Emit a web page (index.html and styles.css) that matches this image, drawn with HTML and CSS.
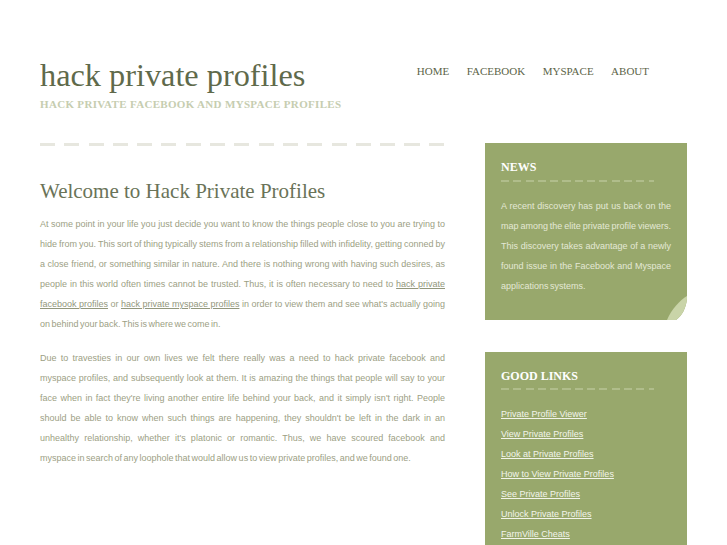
FILE: index.html
```html
<!DOCTYPE html>
<html lang="en">
<head>
<meta charset="utf-8">
<title>hack private profiles</title>
<link rel="stylesheet" href="styles.css">
</head>
<body>
<div class="page">
  <header class="header">
    <div class="brand">
      <h1 class="site-title">hack private profiles</h1>
      <p class="tagline">HACK PRIVATE FACEBOOK AND MYSPACE PROFILES</p>
    </div>
    <nav class="nav">
      <a href="#">HOME</a>
      <a href="#">FACEBOOK</a>
      <a href="#">MYSPACE</a>
      <a href="#">ABOUT</a>
    </nav>
  </header>
  <div class="main">
    <div class="content">
      <div class="rule"></div>
      <h2 class="post-title">Welcome to Hack Private Profiles</h2>
      <p class="text">
        <span class="ln">At some point in your life you just decide you want to know the things people close to you are trying to</span>
        <span class="ln">hide from you. This sort of thing typically stems from a relationship filled with infidelity, getting conned by</span>
        <span class="ln">a close friend, or something similar in nature. And there is nothing wrong with having such desires, as</span>
        <span class="ln">people in this world often times cannot be trusted. Thus, it is often necessary to need to <a href="#">hack private</a></span>
        <span class="ln"><a href="#">facebook profiles</a> or <a href="#">hack private myspace profiles</a> in order to view them and see what's actually going</span>
        <span class="ln last">on behind your back. This is where we come in.</span>
      </p>
      <p class="text">
        <span class="ln">Due to travesties in our own lives we felt there really was a need to hack private facebook and</span>
        <span class="ln">myspace profiles, and subsequently look at them. It is amazing the things that people will say to your</span>
        <span class="ln">face when in fact they're living another entire life behind your back, and it simply isn't right. People</span>
        <span class="ln">should be able to know when such things are happening, they shouldn't be left in the dark in an</span>
        <span class="ln">unhealthy relationship, whether it's platonic or romantic. Thus, we have scoured facebook and</span>
        <span class="ln last">myspace in search of any loophole that would allow us to view private profiles, and we found one.</span>
      </p>
    </div>
    <aside class="sidebar">
      <section class="box news">
        <h3 class="box-title">NEWS</h3>
        <div class="box-rule"></div>
        <p class="box-text">
          <span class="ln">A recent discovery has put us back on the</span>
          <span class="ln">map among the elite private profile viewers.</span>
          <span class="ln">This discovery takes advantage of a newly</span>
          <span class="ln">found issue in the Facebook and Myspace</span>
          <span class="ln last">applications systems.</span>
        </p>
        <svg class="curl" width="22" height="24" viewBox="0 0 22 24" aria-hidden="true">
          <path d="M22 3 C21 12 17 20 11 24 L22 24 Z" fill="#ffffff"/>
          <path d="M22 0 C15 4 6 14 2 24 L11 24 C17 20 21 12 22 3 Z" fill="#c9d4a8"/>
        </svg>
      </section>
      <section class="box links">
        <h3 class="box-title">GOOD LINKS</h3>
        <div class="box-rule"></div>
        <ul class="link-list">
          <li><a href="#">Private Profile Viewer</a></li>
          <li><a href="#">View Private Profiles</a></li>
          <li><a href="#">Look at Private Profiles</a></li>
          <li><a href="#">How to View Private Profiles</a></li>
          <li><a href="#">See Private Profiles</a></li>
          <li><a href="#">Unlock Private Profiles</a></li>
          <li><a href="#">FarmVille Cheats</a></li>
        </ul>
      </section>
    </aside>
  </div>
</div>
</body>
</html>
```

FILE: styles.css
```css
html {
  overflow: hidden;
}

body {
  margin: 0;
  background: #ffffff;
  font-family: "Liberation Sans", Arial, sans-serif;
}

.page {
  width: 647px;
  margin: 0 auto;
  padding-top: 57px;
}

.header {
  display: flex;
  justify-content: space-between;
  align-items: flex-start;
  margin-bottom: 32px;
}

.site-title {
  margin: 0;
  font-family: "Liberation Serif", "Times New Roman", serif;
  font-size: 32.3px;
  line-height: 36px;
  font-weight: normal;
  color: #5f6a4b;
}

.tagline {
  margin: 4px 0 0;
  font-family: "Liberation Serif", "Times New Roman", serif;
  font-size: 11px;
  line-height: 14px;
  font-weight: bold;
  letter-spacing: 0.32px;
  color: #c6cdb0;
}

.nav {
  display: flex;
  gap: 17.5px;
  margin: 7px 38px 0 0;
  font-family: "Liberation Serif", "Times New Roman", serif;
  font-size: 11px;
  line-height: 14px;
}

.nav a {
  color: #5c6448;
  text-decoration: none;
}

.main {
  display: flex;
  justify-content: space-between;
  align-items: flex-start;
}

.content {
  width: 405px;
}

.rule {
  width: 404px;
  height: 3px;
  background: repeating-linear-gradient(90deg, #e7e7df 0 15px, transparent 15px 24.3px);
}

.post-title {
  margin: 33px 0 0;
  font-family: "Liberation Serif", "Times New Roman", serif;
  font-size: 21px;
  line-height: 24px;
  font-weight: normal;
  color: #6a7358;
}

.text {
  margin: 11px 0 0;
  font-size: 9px;
  line-height: 20px;
  color: #9ca084;
  text-align: justify;
  word-spacing: -1px;
}

.text + .text {
  margin-top: 13.5px;
}

.ln {
  display: block;
  text-align-last: justify;
}

.ln.last {
  text-align-last: left;
}

.text a {
  color: #92977c;
  text-decoration: underline;
}

.sidebar {
  width: 202px;
}

.box {
  position: relative;
  background: #98a86c;
  padding: 17px 16px 24px;
}

.links {
  margin-top: 32px;
}

.box-title {
  margin: 0;
  font-family: "Liberation Serif", "Times New Roman", serif;
  font-size: 12px;
  line-height: 14px;
  font-weight: bold;
  color: #ffffff;
}

.box-rule {
  margin-top: 5.5px;
  width: 153px;
  height: 2px;
  background: repeating-linear-gradient(90deg, #b0bd8b 0 8px, transparent 8px 12.3px);
}

.box-text {
  margin: 14px 0 0;
  font-size: 9px;
  line-height: 20px;
  color: #e4e9d6;
  text-align: justify;
  word-spacing: -1px;
}

.curl {
  position: absolute;
  right: 0;
  bottom: 0;
  display: block;
}

.link-list {
  list-style: none;
  margin: 14px 0 0;
  padding: 0;
  font-size: 9px;
  line-height: 20px;
}

.link-list a {
  color: #f2f4ea;
  text-decoration: underline;
}
```
